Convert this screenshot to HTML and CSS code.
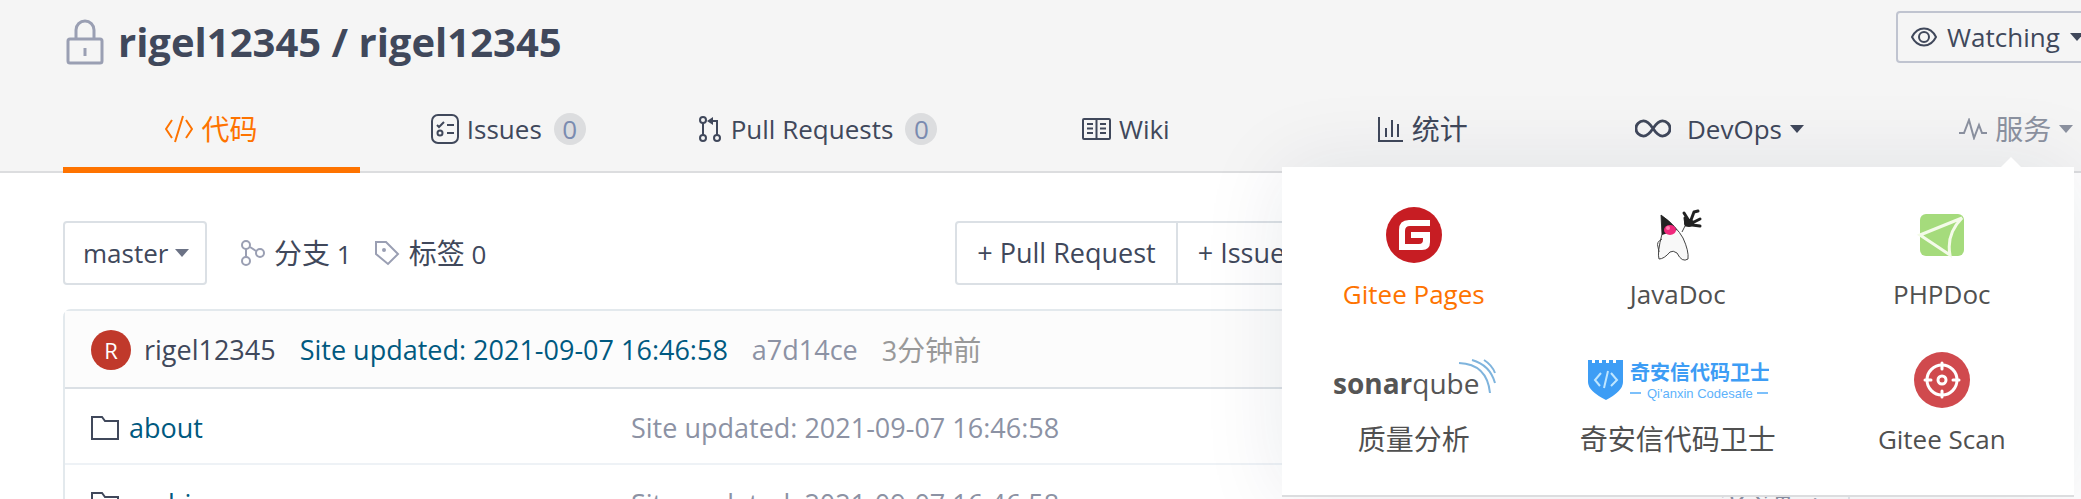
FILE: index.html
```
<!DOCTYPE html>
<html lang="zh-CN">
<head>
    <meta charset="UTF-8">
    <meta name="viewport" content="width=device-width, initial-scale=1.0">
    <title>rigel12345 / rigel12345</title>
    <link rel="stylesheet" href="styles.css">
</head>
<body>
    <header class="repo-header">
        <div class="container">
            <div class="title-row">
                <h1 class="title">
                    <svg class="lock" width="38" height="46" viewBox="0 0 38 46"><rect x="2" y="20" width="34" height="24" rx="2"/><path d="M10 20V11a9 9 0 0 1 18 0v9M19 29v8"/></svg>
                    <span>rigel12345 / rigel12345</span>
                </h1>
                <div class="watch-group">
                    <button class="watch-btn">
                        <svg class="icon" width="26" height="20" viewBox="0 0 26 20"><path d="M1 10C4 4 8 1.500 13 1.500S22 4 25 10c-3 6-7 8.500-12 8.500S4 16 1 10z"/><circle cx="13" cy="10" r="5"/></svg>
                        Watching
                        <i class="caret"></i>
                    </button>
                    <button class="watch-count">1</button>
                </div>
            </div>

            <nav class="tabs">
                <a class="tab active" href="#">
                    <svg class="icon" width="28" height="28" viewBox="0 0 28 28"><path d="M7 5L1 14l6 9M21 5l6 9-6 9M18 1L10 27"/></svg>
                    <span class="cn">代码</span>
                </a>
                <a class="tab" href="#">
                    <svg class="icon" width="28" height="30" viewBox="0 0 28 30"><rect x="1" y="1" width="26" height="28" rx="6"/><path d="M6 11l2 2 5-5M16 11h7M16 19h7"/><circle cx="9" cy="19" r="2.500"/></svg>
                    <span>Issues</span>
                    <span class="badge">0</span>
                </a>
                <a class="tab" href="#">
                    <svg class="icon" width="26" height="28" viewBox="0 0 26 28"><circle cx="6" cy="5" r="3"/><circle cx="6" cy="23" r="3"/><circle cx="20" cy="23" r="3"/><path d="M6 8v12M20 20V6h-6"/><path class="arrow" d="M16 2v8l-6-4z"/></svg>
                    <span>Pull Requests</span>
                    <span class="badge">0</span>
                </a>
                <a class="tab" href="#">
                    <svg class="icon" width="29" height="22" viewBox="0 0 29 22"><rect x="1" y="1" width="27" height="20" rx="1"/><path d="M14.500 1v20M5 6h6M5 10.500h6M5 15h6M18 6h6M18 10.500h6M18 15h6"/></svg>
                    <span>Wiki</span>
                </a>
                <a class="tab" href="#">
                    <svg class="icon" width="26" height="26" viewBox="0 0 26 26"><path d="M1 1v24h24M8 21v-9M14 21V4M20 21V8"/></svg>
                    <span class="cn">统计</span>
                </a>
                <a class="tab tab-devops" href="#">
                    <svg class="icon bold" width="36" height="19" viewBox="0 0 38 20"><path d="M19 10C15 4 12.500 2 9 2a8 8 0 0 0 0 16c3.500 0 6-2 10-8s6.500-8 10-8a8 8 0 0 1 0 16c-3.500 0-6-2-10-8z"/></svg>
                    <span>DevOps</span>
                    <i class="caret"></i>
                </a>
                <div class="tab tab-service">
                    <a class="tab-label" href="#">
                        <svg class="icon" width="28" height="22" viewBox="0 0 28 22"><path d="M0 15h5l5-13 5 18 5-13 3 8h5"/></svg>
                        <span class="cn">服务</span>
                        <i class="caret"></i>
                    </a>
                    <div class="service-menu">
                        <a class="service current" href="#">
                            <svg class="logo" width="56" height="56" viewBox="0 0 56 56"><circle cx="28" cy="28" r="28" fill="#c71d23"/><path d="M44 13v6H24q-5 0-5 5v13h14q4 0 4-4v-2H25v-6h19v10q0 8-8 8H13V23q0-10 10-10z" fill="#fff"/></svg>
                            <span>Gitee Pages</span>
                        </a>
                        <a class="service" href="#">
                            <svg class="logo" width="56" height="56" viewBox="0 0 56 56"><path d="M11 8Q27 20 33 31q6 13 5 21-6 4-11-6-4-3-7-1-6 7-11 7Q7 46 12 27z" fill="#f8f8f8" stroke="#444"/><path d="M11 8Q22 15 27 23L12 28z" fill="#222"/><ellipse cx="20" cy="23" rx="6" ry="5" fill="#f0287c"/><circle cx="18" cy="21" r="2" fill="#ff7fae"/><path d="M12 32q-6 3-4 8l1 5M32 25l3-6" fill="none" stroke="#444"/><path d="M36 18L35 11M39 14l-5-8M41 13l3-8 4-1M42 16l8-4M42 18l8 1" fill="none" stroke="#222" stroke-width="3" stroke-linecap="round" stroke-linejoin="round"/><ellipse cx="39" cy="16" rx="5" ry="4" fill="#222"/></svg>
                            <span>JavaDoc</span>
                        </a>
                        <a class="service" href="#">
                            <svg class="logo" width="56" height="56" viewBox="0 0 56 56"><rect x="6" y="7" width="44" height="42" rx="6" fill="#a5db7c"/><path d="M6 28L48 11Q32 27 36 48z" fill="none" stroke="#f4fbe9" stroke-width="3"/></svg>
                            <span>PHPDoc</span>
                        </a>
                        <a class="service" href="#">
                            <svg class="logo" width="172" height="56" viewBox="0 0 172 56"><text x="5" y="42" class="sonar"><tspan class="sonar-bold">sonar</tspan>qube</text><path d="M131 11q28 1 31 30M144 8q18 5 23 23M156 8q8 5 11 13" fill="none" stroke="#7fb4dd" stroke-width="2"/></svg>
                            <span class="cn">质量分析</span>
                        </a>
                        <a class="service" href="#">
                            <svg class="logo" width="182" height="56" viewBox="0 0 182 56"><path d="M1 8h4v3h3V8h4v3h3V8h4v3h3V8h4v3h3V8h7v22q0 9-17 18Q1 39 1 30z" fill="#3d9df5"/><path d="M14 21l-6 7 5 6M24 21l6 7-6 6M21 19l-4 17" fill="none" stroke="#bfe6ff" stroke-width="2"/><text x="43" y="28" class="qax">奇安信代码卫士</text><text x="60" y="46" class="qax-en">Qi'anxin Codesafe</text><path d="M43 41h11M170 41h11" stroke="#7cc0fb" stroke-width="2"/></svg>
                            <span class="cn">奇安信代码卫士</span>
                        </a>
                        <a class="service" href="#">
                            <svg class="logo" width="56" height="56" viewBox="0 0 56 56"><circle cx="28" cy="28" r="28" fill="#d04a4e"/><g fill="none" stroke="#fff" stroke-width="3" stroke-linecap="round"><circle cx="28" cy="28" r="15"/><circle cx="28" cy="28" r="4"/><path d="M28 11v6M28 39v6M11 28h6M39 28h6"/></g></svg>
                            <span>Gitee Scan</span>
                        </a>
                    </div>
                </div>
            </nav>
        </div>
    </header>

    <main class="container content">
        <section class="files">
            <div class="toolbar">
                <div class="branch">
                    <select class="branch-select" aria-label="branch">
                        <option>master</option>
                    </select>
                    <i class="caret"></i>
                </div>
                <a class="stat" href="#">
                    <svg class="icon" width="24" height="26" viewBox="0 0 24 26"><circle cx="5" cy="5" r="4"/><circle cx="5" cy="21" r="4"/><circle cx="19" cy="13" r="4"/><path d="M5 9v8M9 7l6 4"/></svg>
                    <span><span class="cn">分支</span> 1</span>
                </a>
                <a class="stat" href="#">
                    <svg class="icon" width="26" height="26" viewBox="0 0 26 26"><path d="M2 2h10l12 12-10 10L2 14z"/><circle cx="10" cy="10" r="1"/></svg>
                    <span><span class="cn">标签</span> 0</span>
                </a>
                <div class="create-group">
                    <button>+ Pull Request</button>
                    <button>+ Issue</button>
                </div>
            </div>

            <div class="tree">
                <div class="last-commit">
                    <span class="avatar">R</span>
                    <a class="author" href="#">rigel12345</a>
                    <a class="message" href="#">Site updated: 2021-09-07 16:46:58</a>
                    <a class="sha" href="#">a7d14ce</a>
                    <span class="age">3<span class="cn">分钟前</span></span>
                </div>
                <table>
                    <tr>
                        <td class="name"><a href="#"><svg class="icon" width="28" height="24" viewBox="0 0 28 24"><path d="M1 1h10l3 4h13v18H1z"/></svg>about</a></td>
                        <td>Site updated: 2021-09-07 16:46:58</td>
                        <td class="time">3<span class="cn">分钟前</span></td>
                    </tr>
                    <tr>
                        <td class="name"><a href="#"><svg class="icon" width="28" height="24" viewBox="0 0 28 24"><path d="M1 1h10l3 4h13v18H1z"/></svg>archives</a></td>
                        <td>Site updated: 2021-09-07 16:46:58</td>
                        <td class="time">3<span class="cn">分钟前</span></td>
                    </tr>
                </table>
            </div>
        </section>
        <aside class="sidebar">3</aside>
    </main>
</body>
</html>
```
FILE: styles.css
```
* {
    box-sizing: border-box;
}

body {
    margin: 0;
    height: 100vh;
    overflow: hidden;
    font-family: "Open Sans", "Noto Sans CJK SC", sans-serif;
    font-size: 26px;
    line-height: 38px;
    color: #40485b;
    background-color: #fff;
}

a {
    color: inherit;
    text-decoration: none;
}

button, select {
    font: inherit;
    color: inherit;
    background-color: transparent;
    cursor: pointer;
}

.cn {
    font-size: 28px;
}

.icon {
    flex: none;
    fill: none;
    stroke: currentColor;
    stroke-width: 2;
}

.icon.bold {
    stroke-width: 3;
}

.icon .arrow {
    fill: currentColor;
    stroke: none;
}

.caret {
    border: 7px solid transparent;
    border-top: 8px solid currentColor;
    border-bottom: 0;
}

/* the repo column is a little wider than the window */
.container {
    width: 101%;
    margin-left: 63px;
}

/* header */
.repo-header {
    background-color: #f5f5f5;
    border-bottom: 2px solid #dcdddf;
}

.title-row {
    display: flex;
    justify-content: space-between;
    align-items: flex-start;
    padding: 11px 0 14px;
}

.title {
    display: flex;
    align-items: center;
    gap: 14px;
    margin: 0 3px;
    font-size: 40px;
    line-height: 62px;
}

.lock {
    fill: none;
    stroke: #9a9fb3;
    stroke-width: 3;
}

.watch-group {
    display: flex;
    height: 52px;
    border: 2px solid #c0c4d0;
    border-radius: 4px;
}

.watch-group button {
    border: 0;
}

.watch-btn {
    display: flex;
    align-items: center;
    gap: 10px;
    padding: 0 13px;
}

.watch-count {
    width: 66px;
}

.tabs {
    display: flex;
    margin-bottom: -2px;
}

.tab {
    flex: 1;
    display: flex;
    align-items: center;
    justify-content: center;
    gap: 8px;
    height: 86px;
    padding: 3px 40px 0;
    border-bottom: 6px solid transparent;
    white-space: nowrap;
}

.tab.active {
    color: #fe7300;
    border-color: #fe7300;
}

.tab-devops .icon {
    margin-right: 8px;
}

.badge {
    width: 32px;
    height: 32px;
    margin-left: 4px;
    border-radius: 50%;
    line-height: 32px;
    text-align: center;
    color: #7a8bb0;
    background-color: #dcdddf;
}

.tab-label {
    display: flex;
    align-items: center;
    gap: 8px;
    color: #8c92a0;
}

/* service menu */
.tab-service {
    position: relative;
}

.service-menu {
    position: absolute;
    z-index: 1;
    top: 80px;
    right: 91px;
    display: grid;
    grid-template-columns: repeat(3, 264px);
    grid-auto-rows: 145px;
    padding: 20px 0 18px;
    border-bottom: 2px solid #dcdddf;
    background-color: #fff;
    box-shadow: 0 0 80px rgba(20, 30, 70, 0.09);
}

.service-menu::before {
    content: "";
    position: absolute;
    top: -10px;
    right: 53px;
    border: 10px solid transparent;
    border-top: 0;
    border-bottom-color: #fff;
}

.service {
    display: flex;
    flex-direction: column;
    align-items: center;
    gap: 12px;
    padding-top: 20px;
    color: #505050;
}

.service.current {
    color: #fe7300;
}

.sonar {
    font-size: 28px;
    fill: #555;
}

.sonar-bold {
    font-weight: bold;
}

.qax {
    font-family: "Noto Sans CJK SC", sans-serif;
    font-size: 20px;
    font-weight: bold;
    fill: #3d9df5;
}

.qax-en {
    font-family: "Liberation Sans", sans-serif;
    font-size: 13px;
    fill: #5db2fb;
}

/* files */
.content {
    display: flex;
    padding-top: 48px;
}

.files {
    flex: 0 0 85%;
}

.toolbar {
    display: flex;
    align-items: center;
    height: 64px;
    margin-bottom: 24px;
}

.branch {
    position: relative;
    margin-right: 34px;
}

.branch-select {
    appearance: none;
    height: 64px;
    padding: 0 36px 0 18px;
    border: 2px solid #dbe0e5;
    border-radius: 4px;
}

.branch .caret {
    position: absolute;
    top: 28px;
    right: 18px;
    color: #6b7285;
    pointer-events: none;
}

.stat {
    display: flex;
    align-items: center;
    gap: 9px;
    margin-right: 22px;
}

.stat .icon {
    color: #9a9fb3;
}

.create-group {
    display: flex;
    height: 64px;
    margin-left: 447px;
    border: 2px solid #dbe0e5;
    border-radius: 4px;
    font-size: 27px;
}

.create-group button {
    padding: 0 20px;
    border: 0;
}

.create-group button + button {
    border-left: 2px solid #dbe0e5;
}

.tree {
    border: 2px solid #e3e9ed;
    border-radius: 8px 8px 0 0;
    font-size: 27px;
}

.last-commit {
    display: flex;
    align-items: center;
    height: 78px;
    padding: 2px 0 0 26px;
    border-bottom: 2px solid #dbe0e5;
    background-color: #fcfcfc;
}

.avatar {
    width: 40px;
    height: 40px;
    margin-right: 13px;
    border-radius: 50%;
    line-height: 40px;
    text-align: center;
    font-size: 22px;
    color: #fff;
    background-color: #c0392b;
}

.author, .message, .sha {
    margin-right: 24px;
}

.message, .name {
    color: #005980;
}

.sha {
    color: #8c92a4;
}

.age {
    color: #999;
}

table {
    width: 100%;
    border-spacing: 0;
}

td {
    height: 76px;
    padding: 3px 0 0;
    border-bottom: 2px solid #eef2f6;
    color: #8c92a4;
}

td.name {
    width: 566px;
    padding-left: 26px;
    color: #005980;
}

td.name a {
    display: flex;
    align-items: center;
    gap: 10px;
}

td.name .icon {
    color: #40485b;
}

td.time {
    padding-right: 28px;
    text-align: right;
}

.sidebar {
    flex: 1;
    padding: 278px 78px 0 0;
    text-align: right;
    color: #8c92a4;
}
```
